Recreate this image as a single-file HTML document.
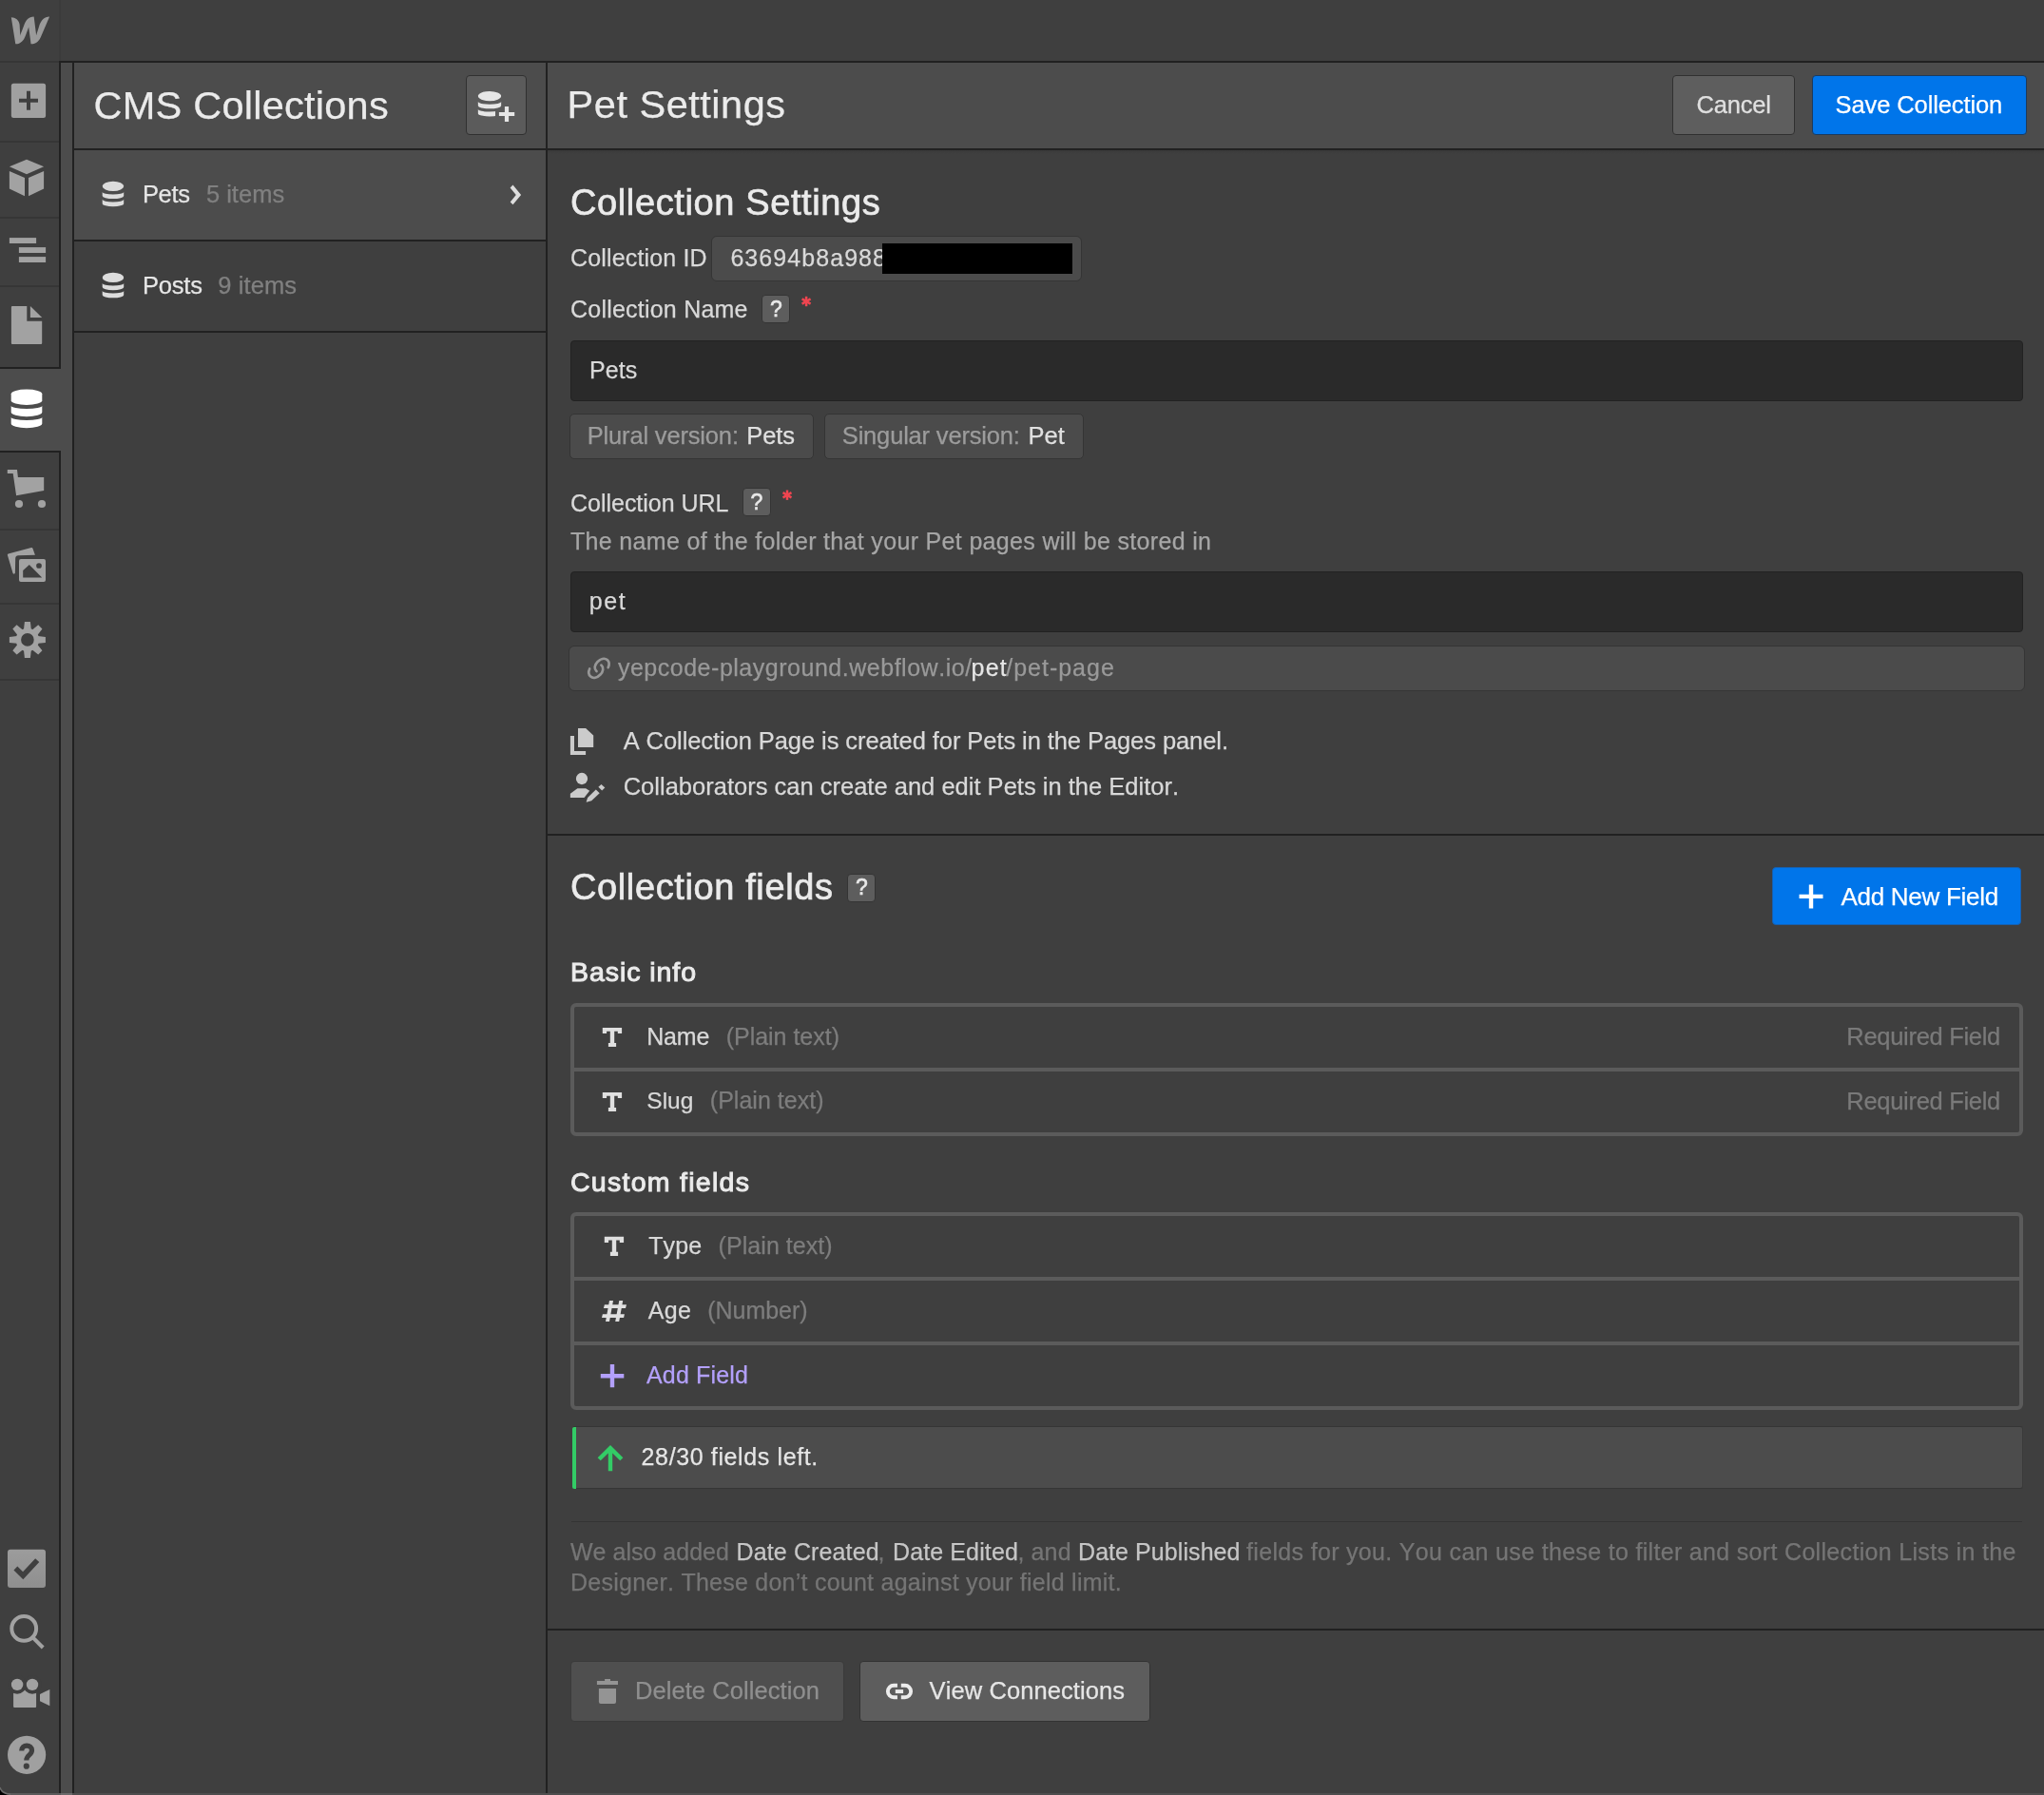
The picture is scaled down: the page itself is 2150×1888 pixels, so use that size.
<!DOCTYPE html>
<html lang="en"><head><meta charset="utf-8"><title>Pet Settings - CMS Collections</title>
<style>
html,body{margin:0;padding:0;}
body{width:2150px;height:1888px;overflow:hidden;background:#3f3f3f;position:relative;font-family:"Liberation Sans",sans-serif;font-kerning:none;}
.a{position:absolute;box-sizing:border-box;}
.t{position:absolute;white-space:nowrap;line-height:1;}
#app{position:absolute;left:0;top:0;width:2150px;height:1888px;overflow:hidden;will-change:transform;}
svg.ov{position:absolute;left:0;top:0;}
</style></head>
<body>
<div id="app">
<div class="a " style="left:0px;top:0px;width:2150px;height:64px;background:#3f3f3f;"></div>
<div class="a " style="left:0px;top:64px;width:62px;height:2px;background:#363636;"></div>
<div class="a " style="left:62px;top:0px;width:2px;height:64px;background:#3b3b3b;"></div>
<div class="a " style="left:62px;top:64px;width:2088px;height:2px;background:#212121;"></div>
<div class="a " style="left:0px;top:66px;width:62px;height:1822px;background:#3f3f3f;"></div>
<div class="a " style="left:0px;top:148px;width:62px;height:2px;background:#363636;"></div>
<div class="a " style="left:0px;top:228px;width:62px;height:2px;background:#363636;"></div>
<div class="a " style="left:0px;top:300px;width:62px;height:2px;background:#363636;"></div>
<div class="a " style="left:0px;top:556px;width:62px;height:2px;background:#363636;"></div>
<div class="a " style="left:0px;top:634px;width:62px;height:2px;background:#363636;"></div>
<div class="a " style="left:0px;top:714px;width:62px;height:2px;background:#363636;"></div>
<div class="a " style="left:64px;top:66px;width:12px;height:1822px;background:#4c4c4c;"></div>
<div class="a " style="left:0px;top:388px;width:64px;height:86px;background:#4c4c4c;"></div>
<div class="a " style="left:0px;top:386px;width:64px;height:2px;background:#212121;"></div>
<div class="a " style="left:0px;top:474px;width:64px;height:2px;background:#212121;"></div>
<div class="a " style="left:62px;top:64px;width:2px;height:324px;background:#212121;"></div>
<div class="a " style="left:62px;top:474px;width:2px;height:1414px;background:#212121;"></div>
<div class="a " style="left:76px;top:64px;width:2px;height:1824px;background:#212121;"></div>
<div class="a " style="left:78px;top:66px;width:496px;height:90px;background:#4c4c4c;"></div>
<div class="a " style="left:78px;top:156px;width:496px;height:2px;background:#212121;"></div>
<div class="a " style="left:78px;top:158px;width:496px;height:94px;background:#4c4c4c;"></div>
<div class="a " style="left:78px;top:252px;width:496px;height:2px;background:#212121;"></div>
<div class="a " style="left:78px;top:254px;width:496px;height:94px;background:#3f3f3f;"></div>
<div class="a " style="left:78px;top:348px;width:496px;height:2px;background:#212121;"></div>
<div class="a " style="left:574px;top:64px;width:2px;height:1824px;background:#212121;"></div>
<div class="a " style="left:490.4px;top:79px;width:63.2px;height:63.4px;background:#5b5b5b;border:1.9px solid #303030;border-radius:4px;"></div>
<div class="a " style="left:576px;top:66px;width:1574px;height:90px;background:#4c4c4c;"></div>
<div class="a " style="left:576px;top:156px;width:1574px;height:2px;background:#212121;"></div>
<div class="a " style="left:576px;top:158px;width:1574px;height:4px;background:linear-gradient(#3a3a3a,#3f3f3f);"></div>
<div class="a " style="left:1759.1px;top:79.25px;width:129.3px;height:62.6px;background:#5e5e5e;border:1.8px solid #303030;border-radius:4px;"></div>
<div class="a " style="left:1905.6px;top:79.3px;width:226.3px;height:62.6px;background:#0075ea;border:1.4px solid #1b3a5e;border-radius:4px;"></div>
<div class="a " style="left:747.7px;top:248px;width:390.3px;height:48px;background:#4b4b4b;border:1.9px solid #353535;border-radius:6px;"></div>
<div class="a " style="left:801.3px;top:310.2px;width:29.4px;height:29.5px;background:#5d5d5d;border:1.8px solid #343434;border-radius:4px;"></div>
<div class="a " style="left:600px;top:358px;width:1528px;height:63.5px;background:#2a2a2a;border:1.5px solid #222;border-radius:4px;"></div>
<div class="a " style="left:598.6px;top:434.5px;width:257.4px;height:48px;background:#4b4b4b;border:1.8px solid #343434;border-radius:5px;"></div>
<div class="a " style="left:866.9px;top:434.5px;width:273px;height:48px;background:#4b4b4b;border:1.8px solid #343434;border-radius:5px;"></div>
<div class="a " style="left:780.5px;top:512.9px;width:30.6px;height:30.6px;background:#5d5d5d;border:1.8px solid #343434;border-radius:4px;"></div>
<div class="a " style="left:600px;top:601px;width:1528px;height:63.5px;background:#2a2a2a;border:1.5px solid #222;border-radius:4px;"></div>
<div class="a " style="left:598.2px;top:679.3px;width:1532px;height:47.4px;background:#4b4b4b;border:1.9px solid #353535;border-radius:6px;"></div>
<div class="a " style="left:576px;top:877px;width:1574px;height:2px;background:#212121;"></div>
<div class="a " style="left:890.9px;top:918.9px;width:30.2px;height:30.2px;background:#5d5d5d;border:1.8px solid #343434;border-radius:4px;"></div>
<div class="a " style="left:1864.3px;top:912.2px;width:262.2px;height:61.3px;background:#0075ea;border:1.2px solid #1660b0;border-radius:4px;"></div>
<div class="a " style="left:600px;top:1055px;width:1528px;height:140px;border:4px solid #5b5b5b;border-radius:6px;"></div>
<div class="a " style="left:604px;top:1123px;width:1520px;height:4px;background:#5b5b5b;"></div>
<div class="a " style="left:600px;top:1275px;width:1528px;height:208px;border:4px solid #5b5b5b;border-radius:6px;"></div>
<div class="a " style="left:604px;top:1343px;width:1520px;height:4px;background:#5b5b5b;"></div>
<div class="a " style="left:604px;top:1411px;width:1520px;height:4px;background:#5b5b5b;"></div>
<div class="a " style="left:601.5px;top:1500px;width:1526px;height:66px;background:#4c4c4c;border-top:1.5px solid #363636;border-bottom:1.5px solid #363636;border-right:1.5px solid #3a3a3a;border-radius:3px;"></div>
<div class="a " style="left:601.5px;top:1500.5px;width:4.5px;height:65px;background:#33cc66;border-radius:2px 0 0 2px;"></div>
<div class="a " style="left:601px;top:1599.5px;width:1526px;height:1.5px;background:#343434;"></div>
<div class="a " style="left:576px;top:1713px;width:1574px;height:2px;background:#212121;"></div>
<div class="a " style="left:600.2px;top:1747.1px;width:287.6px;height:63.8px;background:#4f4f4f;border:1.8px solid #3a3a3a;border-radius:4px;"></div>
<div class="a " style="left:904.2px;top:1747.1px;width:306px;height:63.8px;background:#5d5d5d;border:1.8px solid #333;border-radius:4px;"></div>
<div class="a " style="left:0px;top:1886px;width:64px;height:2px;background:#5a5a5a;"></div>
<div class="a " style="left:64px;top:1886px;width:12px;height:2px;background:#6a6a6a;"></div>
<div class="a " style="left:76px;top:1886px;width:2074px;height:2px;background:#4d4d4d;"></div>
<div class="t" style="left:98.50px;top:90.00px;font-size:41.5px;letter-spacing:0.248px;color:#ebebeb;-webkit-text-stroke:0.25px #ebebeb;">CMS Collections</div>
<div class="t" style="left:596.60px;top:89.00px;font-size:41.5px;letter-spacing:0.511px;color:#ebebeb;-webkit-text-stroke:0.25px #ebebeb;">Pet Settings</div>
<div class="t" style="left:1784.40px;top:98.00px;font-size:25.5px;letter-spacing:-0.158px;color:#e0e0e0;-webkit-text-stroke:0.25px #e0e0e0;">Cancel</div>
<div class="t" style="left:1930.60px;top:98.00px;font-size:25.5px;letter-spacing:-0.106px;color:#ffffff;-webkit-text-stroke:0.25px #ffffff;">Save Collection</div>
<div class="t" style="left:149.90px;top:192.00px;font-size:25.5px;letter-spacing:-0.277px;color:#e6e6e6;-webkit-text-stroke:0.25px #e6e6e6;">Pets</div>
<div class="t" style="left:216.90px;top:192.00px;font-size:25.5px;letter-spacing:0.016px;color:#808080;-webkit-text-stroke:0.25px #808080;">5 items</div>
<div class="t" style="left:149.90px;top:288.00px;font-size:25.5px;letter-spacing:-0.170px;color:#e6e6e6;-webkit-text-stroke:0.25px #e6e6e6;">Posts</div>
<div class="t" style="left:229.20px;top:288.00px;font-size:25.5px;letter-spacing:0.116px;color:#808080;-webkit-text-stroke:0.25px #808080;">9 items</div>
<div class="t" style="left:600.00px;top:194.00px;font-size:38px;letter-spacing:0.615px;color:#ebebeb;-webkit-text-stroke:0.7px #ebebeb;">Collection Settings</div>
<div class="t" style="left:600.00px;top:259.00px;font-size:25px;letter-spacing:0.155px;color:#d9d9d9;-webkit-text-stroke:0.25px #d9d9d9;">Collection ID</div>
<div class="t" style="left:768.40px;top:259.00px;font-size:25px;letter-spacing:1.065px;color:#d9d9d9;-webkit-text-stroke:0.25px #d9d9d9;">63694b8a988</div>
<div class="t" style="left:600.00px;top:313.00px;font-size:25px;letter-spacing:0.220px;color:#d9d9d9;-webkit-text-stroke:0.25px #d9d9d9;">Collection Name</div>
<div class="t" style="left:809.90px;top:314.00px;font-size:23px;letter-spacing:-2.797px;color:#e8e8e8;-webkit-text-stroke:0.6px #e8e8e8;">?</div>
<div class="t" style="left:620.10px;top:377.00px;font-size:25px;letter-spacing:0.056px;color:#d9d9d9;-webkit-text-stroke:0.25px #d9d9d9;">Pets</div>
<div class="t" style="left:617.70px;top:446.00px;font-size:25.5px;letter-spacing:-0.163px;color:#9c9c9c;-webkit-text-stroke:0.25px #9c9c9c;">Plural version:</div>
<div class="t" style="left:785.20px;top:446.00px;font-size:25.5px;letter-spacing:-0.044px;color:#e0e0e0;-webkit-text-stroke:0.25px #e0e0e0;">Pets</div>
<div class="t" style="left:885.80px;top:446.00px;font-size:25.5px;letter-spacing:-0.177px;color:#9c9c9c;-webkit-text-stroke:0.25px #9c9c9c;">Singular version:</div>
<div class="t" style="left:1081.50px;top:446.00px;font-size:25.5px;letter-spacing:0.059px;color:#e0e0e0;-webkit-text-stroke:0.25px #e0e0e0;">Pet</div>
<div class="t" style="left:600.00px;top:517.00px;font-size:25px;letter-spacing:-0.019px;color:#d9d9d9;-webkit-text-stroke:0.25px #d9d9d9;">Collection URL</div>
<div class="t" style="left:789.60px;top:517.00px;font-size:23px;letter-spacing:-2.797px;color:#e8e8e8;-webkit-text-stroke:0.6px #e8e8e8;">?</div>
<div class="t" style="left:600.00px;top:557.00px;font-size:25px;letter-spacing:0.330px;color:#a6a6a6;-webkit-text-stroke:0.25px #a6a6a6;">The name of the folder that your Pet pages will be stored in</div>
<div class="t" style="left:619.70px;top:620.00px;font-size:25px;letter-spacing:1.617px;color:#d9d9d9;-webkit-text-stroke:0.25px #d9d9d9;">pet</div>
<div class="t" style="left:649.90px;top:690.00px;font-size:25px;letter-spacing:0.518px;color:#999999;-webkit-text-stroke:0.25px #999999;">yepcode-playground.webflow.io/</div>
<div class="t" style="left:1021.60px;top:690.00px;font-size:25px;letter-spacing:1.217px;color:#e6e6e6;-webkit-text-stroke:0.25px #e6e6e6;">pet</div>
<div class="t" style="left:1058.30px;top:690.00px;font-size:25px;letter-spacing:0.982px;color:#999999;-webkit-text-stroke:0.25px #999999;">/pet-page</div>
<div class="t" style="left:655.70px;top:767.00px;font-size:25.5px;letter-spacing:-0.079px;color:#d9d9d9;-webkit-text-stroke:0.25px #d9d9d9;">A Collection Page is created for Pets in the Pages panel.</div>
<div class="t" style="left:655.70px;top:815.00px;font-size:25.5px;letter-spacing:0.006px;color:#d9d9d9;-webkit-text-stroke:0.25px #d9d9d9;">Collaborators can create and edit Pets in the Editor.</div>
<div class="t" style="left:600.00px;top:914.00px;font-size:38px;letter-spacing:0.616px;color:#ebebeb;-webkit-text-stroke:0.7px #ebebeb;">Collection fields</div>
<div class="t" style="left:900.00px;top:922.00px;font-size:23px;letter-spacing:-2.797px;color:#e8e8e8;-webkit-text-stroke:0.6px #e8e8e8;">?</div>
<div class="t" style="left:1936.40px;top:930.00px;font-size:26px;letter-spacing:-0.273px;color:#ffffff;-webkit-text-stroke:0.25px #ffffff;">Add New Field</div>
<div class="t" style="left:600.00px;top:1008.00px;font-size:28.5px;letter-spacing:0.938px;color:#ebebeb;-webkit-text-stroke:1px #ebebeb;">Basic info</div>
<div class="t" style="left:680.30px;top:1078.00px;font-size:25px;letter-spacing:-0.229px;color:#d9d9d9;-webkit-text-stroke:0.25px #d9d9d9;">Name</div>
<div class="t" style="left:763.70px;top:1078.00px;font-size:25px;letter-spacing:-0.017px;color:#7d7d7d;-webkit-text-stroke:0.25px #7d7d7d;">(Plain text)</div>
<div class="t" style="left:1942.30px;top:1078.00px;font-size:25.5px;letter-spacing:-0.296px;color:#7a7a7a;-webkit-text-stroke:0.25px #7a7a7a;">Required Field</div>
<div class="t" style="left:680.30px;top:1146.00px;font-size:24.5px;letter-spacing:0.018px;color:#d9d9d9;-webkit-text-stroke:0.25px #d9d9d9;">Slug</div>
<div class="t" style="left:746.80px;top:1145.00px;font-size:25px;letter-spacing:0.029px;color:#7d7d7d;-webkit-text-stroke:0.25px #7d7d7d;">(Plain text)</div>
<div class="t" style="left:1942.30px;top:1146.00px;font-size:25.5px;letter-spacing:-0.296px;color:#7a7a7a;-webkit-text-stroke:0.25px #7a7a7a;">Required Field</div>
<div class="t" style="left:600.00px;top:1229.00px;font-size:28.5px;letter-spacing:1.279px;color:#ebebeb;-webkit-text-stroke:1px #ebebeb;">Custom fields</div>
<div class="t" style="left:682.20px;top:1298.00px;font-size:25px;letter-spacing:0.135px;color:#d9d9d9;-webkit-text-stroke:0.25px #d9d9d9;">Type</div>
<div class="t" style="left:755.60px;top:1298.00px;font-size:25px;letter-spacing:0.056px;color:#7d7d7d;-webkit-text-stroke:0.25px #7d7d7d;">(Plain text)</div>
<div class="t" style="left:681.80px;top:1366.00px;font-size:25px;letter-spacing:0.258px;color:#d9d9d9;-webkit-text-stroke:0.25px #d9d9d9;">Age</div>
<div class="t" style="left:744.30px;top:1366.00px;font-size:25px;letter-spacing:-0.040px;color:#7d7d7d;-webkit-text-stroke:0.25px #7d7d7d;">(Number)</div>
<div class="t" style="left:680.00px;top:1434.00px;font-size:25px;letter-spacing:0.172px;color:#b3a0fb;-webkit-text-stroke:0.25px #b3a0fb;">Add Field</div>
<div class="t" style="left:674.60px;top:1520.00px;font-size:25px;letter-spacing:0.622px;color:#e6e6e6;-webkit-text-stroke:0.25px #e6e6e6;">28/30 fields left.</div>
<div class="t" style="left:600.00px;top:1620.00px;font-size:25px;letter-spacing:0.010px;color:#757575;-webkit-text-stroke:0.25px #757575;">We also added</div>
<div class="t" style="left:774.60px;top:1620.00px;font-size:25px;letter-spacing:0.118px;color:#c6c6c6;-webkit-text-stroke:0.25px #c6c6c6;">Date Created</div>
<div class="t" style="left:923.40px;top:1620.00px;font-size:25px;letter-spacing:-3.953px;color:#757575;-webkit-text-stroke:0.25px #757575;">,</div>
<div class="t" style="left:939.00px;top:1620.00px;font-size:25px;letter-spacing:0.116px;color:#c6c6c6;-webkit-text-stroke:0.25px #c6c6c6;">Date Edited</div>
<div class="t" style="left:1070.60px;top:1620.00px;font-size:25px;letter-spacing:-3.953px;color:#757575;-webkit-text-stroke:0.25px #757575;">,</div>
<div class="t" style="left:1084.50px;top:1620.00px;font-size:25px;letter-spacing:0.191px;color:#757575;-webkit-text-stroke:0.25px #757575;">and</div>
<div class="t" style="left:1134.00px;top:1620.00px;font-size:25px;letter-spacing:0.072px;color:#c6c6c6;-webkit-text-stroke:0.25px #c6c6c6;">Date Published</div>
<div class="t" style="left:1311.10px;top:1620.00px;font-size:25px;letter-spacing:0.321px;color:#757575;-webkit-text-stroke:0.25px #757575;">fields for you. You can use these to filter and sort Collection Lists in the</div>
<div class="t" style="left:600.00px;top:1652.00px;font-size:25px;letter-spacing:0.245px;color:#757575;-webkit-text-stroke:0.25px #757575;">Designer. These don’t count against your field limit.</div>
<div class="t" style="left:667.90px;top:1766.00px;font-size:25.5px;letter-spacing:0.076px;color:#8f8f8f;-webkit-text-stroke:0.25px #8f8f8f;">Delete Collection</div>
<div class="t" style="left:977.60px;top:1766.00px;font-size:25.5px;letter-spacing:0.092px;color:#e6e6e6;-webkit-text-stroke:0.25px #e6e6e6;">View Connections</div>
<div class="a " style="left:927.8px;top:256px;width:200.2px;height:32px;background:#000;"></div>
<svg class="ov" width="2150" height="1888" viewBox="0 0 2150 1888">
<path transform="translate(11.80 10.97) scale(1.6792 1.7398)" d="M17.802 8.56s-1.946 6.103-2.105 6.607a4778.8 4778.8 0 0 0-1.484-11.473c-3.316 0-5.089 2.36-6.026 4.851 0 0-2.365 6.123-2.564 6.637-.013-.953-.365-6.524-.365-6.524C4.942 5.9 2.61 4.205 0 4.205l2.67 16.1c3.386-.013 5.212-2.304 6.169-4.795 0 0 2.033-5.264 2.118-5.503.02.226 1.464 10.298 1.464 10.298 3.4 0 5.232-2.145 6.215-4.494L24 3.694c-3.359 0-5.13 2.293-6.198 4.866z" fill="#9a9a9a"/>
<rect x="11.85" y="87.75" width="36.25" height="36.25" rx="2.5" fill="#a0a0a0"/>
<path d="M20 103.8H28V95.8H32V103.8H40V107.8H32V115.8H28V107.8H20Z" fill="#3f3f3f"/>
<path d="M28 167.8L46.1 175.3L28 183.3L9.9 175.3Z" fill="#a2a2a2"/>
<path d="M9.9 179.9L26 187.1V206.2L9.9 198.4Z" fill="#a2a2a2"/>
<path d="M46.1 179.9L30 187.1V206.2L46.1 198.4Z" fill="#a2a2a2"/>
<rect x="9.9" y="250.1" width="28.2" height="5.9" fill="#a2a2a2"/>
<rect x="19.9" y="260.1" width="28.2" height="5.9" fill="#a2a2a2"/>
<rect x="19.9" y="270.1" width="28.2" height="5.9" fill="#a2a2a2"/>
<path d="M12.9 321.9H28.3V337.8H44.2V361A1 1 0 0 1 43.2 362H12.9A1 1 0 0 1 11.9 361V322.9A1 1 0 0 1 12.9 321.9Z" fill="#a2a2a2"/>
<path d="M31.9 321.9L44.2 334H31.9Z" fill="#a2a2a2"/>
<path d="M11.7 414.3 A16.3 4.7 0 0 1 44.3 414.3 V421.3 A16.3 4.7 0 0 1 11.7 421.3 Z" fill="#ffffff"/>
<path d="M11.7 426.8 A16.3 3.2 0 0 0 44.3 426.8 V433.5 A16.3 4.7 0 0 1 11.7 433.5 Z" fill="#ffffff"/>
<path d="M11.7 438.7 A16.3 3.3 0 0 0 44.3 438.7 V445.5 A16.3 4.7 0 0 1 11.7 445.5 Z" fill="#ffffff"/>
<g fill="#dcdcdc">
<ellipse cx="118.95" cy="195.85" rx="11.25" ry="5.15"/>
<path d="M107.7 201.9 A11.25 2.6 0 0 0 130.2 201.9 V206 A11.25 3.1 0 0 1 107.7 206 Z"/>
<path d="M107.7 209.8 A11.25 2.6 0 0 0 130.2 209.8 V214.2 A11.25 3.0 0 0 1 107.7 214.2 Z"/>
</g>
<g fill="#dcdcdc">
<ellipse cx="118.95" cy="291.95" rx="11.25" ry="5.15"/>
<path d="M107.7 298 A11.25 2.6 0 0 0 130.2 298 V302.1 A11.25 3.1 0 0 1 107.7 302.1 Z"/>
<path d="M107.7 305.9 A11.25 2.6 0 0 0 130.2 305.9 V310.3 A11.25 3.0 0 0 1 107.7 310.3 Z"/>
</g>
<defs><clipPath id="dbc"><path d="M500 90H530V110.2H529.2V114.1H521V125H500Z"/></clipPath></defs>
<g fill="#e6e6e6" clip-path="url(#dbc)">
<ellipse cx="515" cy="101.05" rx="12.15" ry="5.15"/>
<path d="M502.85 107.1 A12.15 2.6 0 0 0 527.15 107.1 V111.2 A12.15 3.1 0 0 1 502.85 111.2 Z"/>
<path d="M502.85 115 A12.15 2.6 0 0 0 527.15 115 V119.4 A12.15 3.0 0 0 1 502.85 119.4 Z"/>
</g>
<path d="M524.9 117.9H530.9V111.9H535.1V117.9H541.2V121.9H535.1V127.9H530.9V121.9H524.9Z" fill="#e6e6e6"/>
<path d="M539.5 194.6L548.1 204.9L539.5 215.2L536.7 212.6L542.8 204.9L536.6 197.4Z" fill="#dedede"/>
<path d="M7.8 494.1H18L18.9 502H46.2V515.9L17.1 521.2L13.7 498H7.8Z" fill="#a2a2a2"/>
<circle cx="20" cy="530" r="4.1" fill="#a2a2a2"/><circle cx="44" cy="530" r="4.1" fill="#a2a2a2"/>
<path d="M8.6 582.6L33 576A1.2 1.2 0 0 1 34.4 576.8L36.9 583.7L19.2 584.2Q16.2 584.4 16.2 587.4L15.9 602.5A1.2 1.2 0 0 1 13.6 602.9L8 584.2A1.2 1.2 0 0 1 8.6 582.6Z" fill="#a2a2a2"/>
<path fill-rule="evenodd" d="M22 588H46A2 2 0 0 1 48 590V609.9A2 2 0 0 1 46 611.9H22A2 2 0 0 1 20 609.9V590A2 2 0 0 1 22 588ZM24.2 607.6V600L30.8 593.9L44.2 607.6ZM43.85 595A2.85 2.85 0 1 0 38.15 595A2.85 2.85 0 1 0 43.85 595Z" fill="#a2a2a2"/>
<path d="M32.80 661.92 L31.90 653.90 L25.90 653.90 L25.00 661.92 Z" fill="#a2a2a2"/>
<path d="M39.42 667.89 L44.46 661.59 L40.21 657.34 L33.91 662.38 Z" fill="#a2a2a2"/>
<path d="M39.88 676.80 L47.90 675.90 L47.90 669.90 L39.88 669.00 Z" fill="#a2a2a2"/>
<path d="M33.91 683.42 L40.21 688.46 L44.46 684.21 L39.42 677.91 Z" fill="#a2a2a2"/>
<path d="M25.00 683.88 L25.90 691.90 L31.90 691.90 L32.80 683.88 Z" fill="#a2a2a2"/>
<path d="M18.38 677.91 L13.34 684.21 L17.59 688.46 L23.89 683.42 Z" fill="#a2a2a2"/>
<path d="M17.92 669.00 L9.90 669.90 L9.90 675.90 L17.92 676.80 Z" fill="#a2a2a2"/>
<path d="M23.89 662.38 L17.59 657.34 L13.34 661.59 L18.38 667.89 Z" fill="#a2a2a2"/>
<path fill-rule="evenodd" d="M16.70 672.90 a12.2 12.2 0 1 0 24.4 0 a12.2 12.2 0 1 0 -24.4 0 Z M22.10 672.90 a6.8 6.8 0 1 1 13.6 0 a6.8 6.8 0 1 1 -13.6 0 Z" fill="#a2a2a2"/>
<defs><linearGradient id="cg" x1="0" y1="0" x2="0" y2="1"><stop offset="0" stop-color="#9c9c9c"/><stop offset="1" stop-color="#8f8f8f"/></linearGradient></defs>
<rect x="8" y="1629.8" width="40" height="40.1" rx="3" fill="url(#cg)"/>
<path d="M16.4 1649.6L24.2 1657.2L39.2 1641.2" fill="none" stroke="#3f3f3f" stroke-width="5.6"/>
<circle cx="25.2" cy="1712.9" r="12.9" fill="none" stroke="#a2a2a2" stroke-width="4"/>
<path d="M34.6 1722.3L45.2 1733" stroke="#a2a2a2" stroke-width="4" fill="none"/>
<rect x="14.1" y="1776" width="24" height="20" rx="1" fill="#a2a2a2"/>
<circle cx="18.1" cy="1771.9" r="9.8" fill="#3f3f3f"/><circle cx="34" cy="1771.9" r="9.8" fill="#3f3f3f"/>
<circle cx="18.1" cy="1771.9" r="6.2" fill="#a2a2a2"/><circle cx="34" cy="1771.9" r="6.2" fill="#a2a2a2"/>
<path d="M42 1781.9L52.3 1776.9V1794.2L42 1789.2Z" fill="#a2a2a2"/>
<circle cx="28.1" cy="1845.8" r="20.1" fill="#a0a0a0"/>
<path d="M22.7 1841.6C22.7 1834.4 33.5 1834.4 33.5 1841C33.5 1846.2 27.8 1845.6 27.8 1851.6" fill="none" stroke="#3f3f3f" stroke-width="5.2"/>
<circle cx="27.8" cy="1857.7" r="3.1" fill="#3f3f3f"/>
<path d="M0 1888V1880Q1.5 1886.6 11 1888Z" fill="#000"/>
<path d="M0 1880Q1.5 1886.6 11 1887.2" fill="none" stroke="#6a6a6a" stroke-width="1.4"/>
<path d="M848.10 311.80L848.10 322.20" stroke="#ef4550" stroke-width="2.5" fill="none"/>
<path d="M843.60 314.40L852.60 319.60" stroke="#ef4550" stroke-width="2.5" fill="none"/>
<path d="M852.60 314.40L843.60 319.60" stroke="#ef4550" stroke-width="2.5" fill="none"/>
<path d="M828.00 515.50L828.00 525.90" stroke="#ef4550" stroke-width="2.5" fill="none"/>
<path d="M823.50 518.10L832.50 523.30" stroke="#ef4550" stroke-width="2.5" fill="none"/>
<path d="M832.50 518.10L823.50 523.30" stroke="#ef4550" stroke-width="2.5" fill="none"/>
<g fill="none" stroke="#979797" stroke-width="2.7" stroke-linecap="round"><path d="M627.5 706.1C624.6 703.6 625.3 699.4 628.4 696.2C631.6 692.9 635.9 691.6 638.7 694.1C640.9 696.1 641 699.5 639.7 702.2"/><path transform="rotate(180 629.95 702.85)" d="M627.5 706.1C624.6 703.6 625.3 699.4 628.4 696.2C631.6 692.9 635.9 691.6 638.7 694.1C640.9 696.1 641 699.5 639.7 702.2"/></g>
<path d="M608 766.1H616.1L624.2 773.4V785.9H608Z" fill="#cbcbcb"/>
<path d="M599.9 774H604V789.9H616.1V794H599.9Z" fill="#cbcbcb"/>
<circle cx="612" cy="819" r="6.15" fill="#cbcbcb"/>
<path d="M599.9 838.9V834.8L607.4 829.2H616.1L620.2 831.8L614.5 838.9Z" fill="#cbcbcb"/>
<path d="M616.6 843.8L618.1 838.9L626.8 830.5L630.7 834.3L622.2 842.3Z" fill="#cbcbcb"/>
<path d="M629.4 827.7L632.5 824.9L636.3 828.4L633.2 831.5Z" fill="#cbcbcb"/>
<path d="M1892.5 940.7H1902.8V930.4H1907.2V940.7H1917.5V945.1H1907.2V955.4H1902.8V945.1H1892.5Z" fill="#fff"/>
<path transform="translate(633.8 1080.9)" d="M0 0H20.3V6.1H16V3.8H12.4V16H14.3V20.2H6.1V16H8V3.8H4.3V6.1H0Z" fill="#e0e0e0"/>
<path transform="translate(633.8 1148.9)" d="M0 0H20.3V6.1H16V3.8H12.4V16H14.3V20.2H6.1V16H8V3.8H4.3V6.1H0Z" fill="#e0e0e0"/>
<path transform="translate(635.8 1300.8)" d="M0 0H20.3V6.1H16V3.8H12.4V16H14.3V20.2H6.1V16H8V3.8H4.3V6.1H0Z" fill="#e0e0e0"/>
<path d="M641 1368H645L641 1390.1H637Z M651.3 1368H655.2L651.2 1390.1H647.2Z M635.9 1372.2H659L658 1375.9H634.9Z M633.9 1382.2H656.9L656.1 1385.9H633Z" fill="#e0e0e0"/>
<path d="M631.8 1445H641.8V1435.1H646.2V1445H656.3V1449.4H646.2V1459.3H641.8V1449.4H631.8Z" fill="#b3a0fb"/>
<path d="M642 1547.2V1523.2M630.2 1534.8L642 1523.1L653.8 1534.8" fill="none" stroke="#33cc66" stroke-width="4.4"/>
<path d="M627.9 1768H636.1V1766H642V1768H650V1772H627.9Z" fill="#949494"/>
<path d="M629.9 1775.9H648V1790A2 2 0 0 1 646 1792H631.9A2 2 0 0 1 629.9 1790Z" fill="#949494"/>
<path d="M943.95 1770.8H940.1A8.2 8.2 0 0 0 940.1 1787.2H943.95V1783.3H940.1A4.3 4.3 0 0 1 940.1 1774.7H943.95Z" fill="#ececec"/>
<path d="M947.8 1770.8H951.9A8.2 8.2 0 0 1 951.9 1787.2H947.8V1783.3H951.9A4.3 4.3 0 0 0 951.9 1774.7H947.8Z" fill="#ececec"/>
<rect x="941.8" y="1777.1" width="8.3" height="4" fill="#ececec"/>
</svg>
</div>
</body></html>
